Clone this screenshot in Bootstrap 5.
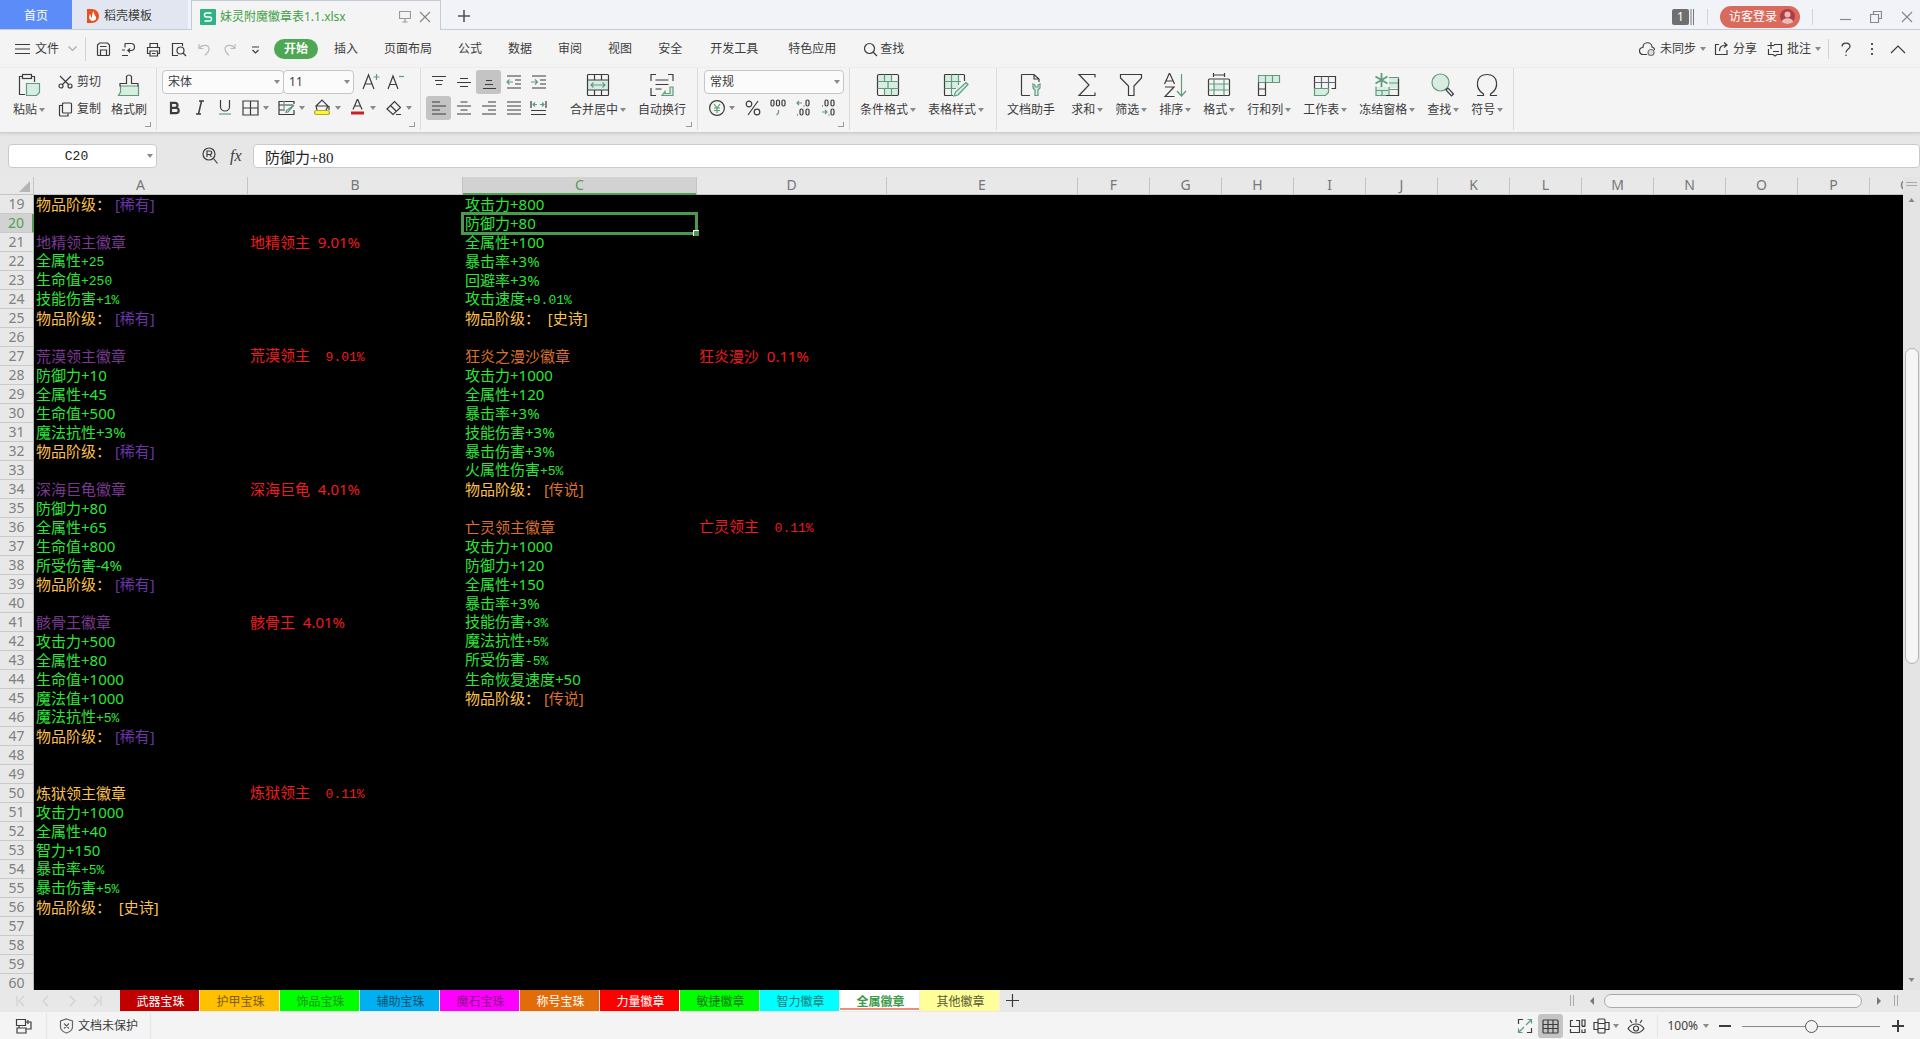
<!DOCTYPE html>
<html lang="zh-CN">
<head>
<meta charset="utf-8">
<meta name="viewport" content="width=device-width, initial-scale=1">
<title>妹灵附魔徽章表1.1.xlsx</title>
<link rel="stylesheet" href="https://cdn.jsdelivr.net/npm/bootstrap@5.3.0/dist/css/bootstrap.min.css">
<style>
:root{--ui:"Noto Sans","Noto Sans CJK SC",sans-serif;--ink:#3c3c3c;--line:#dcdcdc;--grn:#4fa050}
body{font-family:var(--ui);font-size:12px;line-height:16px;color:var(--ink);background:#e7e7e7;overflow:hidden}
button{font:inherit;color:inherit;background:none;border:0;padding:0;white-space:nowrap}
svg{display:block;flex:none;fill:none;stroke:#3c3c3c;stroke-width:1.2}
.g{stroke:#5e9c7c}.gf{stroke:#5e9c7c;fill:#d9ece2}.f{fill:#d9ece2;stroke:none}
.caret{width:0;height:0;border:3px solid transparent;border-top:4px solid #8a8a8a;border-bottom:0;flex:none}
.vline{width:1px;background:#d0d3da;flex:none}

.titlebar{height:30px;background:#f1f3f9;border-bottom:1px solid #c3cad8}
.titlebar>*{height:29px;padding-top:2px}
.home-tab{width:72px;background:#5b8cf8;color:#fff}
.docer-tab{width:116px;background:#e2e6f0;padding-left:14px;gap:4px}
.file-tab{width:250px;margin-left:3px;background:#f4f4f4;border:solid #c3cad8;border-width:1px 1px 0;height:30px;padding:2px 9px 0 8px;color:#3f9f45}
.win-count{background:#6f6f6f;color:#fff;width:17px;height:16px;border-radius:2px}
.login{background:#d96a5c;color:#fff;width:80px;height:22px;border-radius:11px;padding:0 5px 0 9px}

.menubar{height:38px;background:#f4f4f4;padding-top:1px}
.menubar .item{padding:0 13px;height:20px}
.menubar .wide{padding:0 15px}
.menubar .on{background:#4ea853;color:#fff;border-radius:10px;padding:0 10px;margin-right:3px;font-weight:700}

.ribbon{height:65px;background:#f4f4f4;border-bottom:1px solid #cdcdcd;box-shadow:0 1px 3px #cfcfcf;position:relative}
.grp{height:62px;border-right:1px solid var(--line);position:relative;padding-top:2px}
.grp.more::after{content:"";position:absolute;right:5px;bottom:3px;width:6px;height:5px;border:solid #999;border-width:0 1px 1px 0}
.big{display:flex;flex-direction:column;align-items:center;padding:3px 6px 0;gap:5px}
.big svg{height:24px}
.lab{display:flex;align-items:center;gap:2px}
.tool{width:25px;height:24px;display:flex;align-items:center;justify-content:center;border-radius:3px}
.drop{width:36px;height:24px;display:flex;align-items:center;gap:4px;padding-left:5px}
.sel{background:#c4c4c4}
.pick{position:relative;display:block}
.pick select{appearance:none;width:100%;height:24px;border:1px solid #c6c6c6;background:#fbfbfb;border-radius:4px;padding:0 5px;color:var(--ink);font-size:12px}
.pick::after{content:"";position:absolute;right:4px;top:10px;border:3px solid transparent;border-top:4px solid #8a8a8a;border-bottom:0}

.fbar{height:44px;padding-top:11px}
.fbar input{height:24px;border:1px solid #cacaca;border-radius:4px;background:#fff;color:#222}
.cellname input{width:149px;text-align:center;padding:1px 12px 0 0;font-family:"Liberation Mono",monospace;font-size:13px}
.formula{padding:1px 11px 0;font-family:"Liberation Serif","Noto Sans CJK SC",serif;font-size:15px}
.fx{font-family:"Liberation Serif",serif;width:14px}

.sheet{background:#000;overflow:hidden;min-height:0}
.grid{table-layout:fixed;border-collapse:separate;border-spacing:0;width:1942px;font-size:15px;line-height:16px}
.grid th{font-size:14px;font-weight:400;text-align:center;color:#808080;background:#e8e8e8;padding:0}
.grid thead th{height:18px;border-bottom:1px solid #c4c4c4;border-right:1px solid #c4c4c4;color:#777}
.grid tbody th{border-right:1px solid #b9b9b9;border-bottom:1px solid #c9c9c9}
.grid tbody tr{height:19px}
.grid td{padding:0 2px;white-space:nowrap;color:#2ce53a;vertical-align:middle;overflow:visible}
.grid thead .colsel{background:#d2d2d2;color:var(--grn);border-bottom-color:var(--grn);box-shadow:inset 0 -1px var(--grn)}
.grid .rowsel{background:#d2d2d2;color:var(--grn);border-right:2px solid var(--grn)}
.grid td.pick-cell{position:relative}
.pick-cell::before{content:"";position:absolute;inset:-2px -1px -2px -2px;border:3px solid #4c9850}
.pick-cell::after{content:"";position:absolute;right:-2px;bottom:-3px;width:6px;height:6px;background:#4c9850;border:solid #fff;border-width:1px 0 0 1px}
.song{font-family:"Liberation Mono",monospace;font-size:13px}
.grid .gold{color:#fcc14d}.rare{color:#6a35a8}.grid .tt{color:#78398f}.grid .leg{color:#dc702d}.grid .red{color:#ee1c1f}
.corner svg{margin:3px 3px 0 auto}
.vscroll{width:17px;background:#e4e4e4;flex:none;padding-top:4px}
.vthumb{width:14px;height:316px;margin-top:143px;border:1px solid #b3b3b3;border-radius:7px;background:#f5f5f5}

.tabstrip{height:22px;background:#e8e8e8}
.tabstrip .tabs button{width:80px;height:21px;border-right:1px solid #eee;padding:2px 0 0 2px}
.tabs .t-white{color:#fff}
.tabs .now{background:#fff;color:#3d9b49;font-weight:700;box-shadow:inset 0 -1px #fff,inset 0 -3px #f28b78,inset 4px 0 #fff,inset -4px 0 #fff}
.hthumb{width:258px;height:14px;border:1px solid #a9a9a9;border-radius:7px;background:#f4f4f4}
.statusbar{height:27px;background:#f4f4f4;padding-top:1px}
.zoomer{appearance:none;width:138px;height:14px;background:linear-gradient(#8a8a8a,#8a8a8a) center/100% 1px no-repeat}
.zoomer::-webkit-slider-thumb{appearance:none;width:13px;height:13px;border-radius:50%;border:1px solid #555;background:#f4f4f4}
</style>
<script src="https://cdn.jsdelivr.net/npm/bootstrap@5.3.0/dist/js/bootstrap.bundle.min.js"></script>
</head>
<body class="vh-100 d-flex flex-column">

<header class="titlebar d-flex align-items-start">
  <button class="home-tab">首页</button>
  <button class="docer-tab d-flex align-items-center">
    <svg width="14" height="16" viewBox="0 0 14 16" style="stroke:none"><path d="M1 1h5a7 7 0 0 1 0 14H1z" fill="#e8501f"/><path d="M6 13C2 11 3 8 4 6c1 2 1 3 2 4 0-3 0-5 2-7-1 4 3 5 2 8-1 1-2 2-4 2z" fill="#fff"/></svg>稻壳模板</button>
  <div class="file-tab d-flex align-items-center">
    <svg width="16" height="16" viewBox="0 0 16 16"><rect width="16" height="16" rx="1" fill="#30b384" stroke="none"/><path d="M11.500 4H6.500a2 2 0 0 0 0 4h3a2 2 0 0 1 0 4H4.500" stroke="#fff" stroke-width="1.500"/></svg>
    <span class="ms-1 me-auto">妹灵附魔徽章表1.1.xlsx</span>
    <svg class="me-2" width="12" height="13" viewBox="0 0 12 13" style="stroke:#999"><path d="M.5 1.500h11v7H.5zM6 8.500v3M3.500 12h5"/></svg>
    <button aria-label="关闭标签"><svg width="12" height="12" viewBox="0 0 12 12" style="stroke:#888"><path d="M1 1l10 10M11 1L1 11"/></svg></button>
  </div>
  <button class="ms-3 me-auto d-flex align-items-center" aria-label="新建"><svg width="14" height="14" viewBox="0 0 14 14" style="stroke:#555;stroke-width:1.600"><path d="M7 1v12M1 7h12"/></svg></button>
  <div class="d-flex align-items-center pt-1" style="padding-right:7px">
    <span class="win-count text-center">1</span>
    <svg class="me-2" width="6" height="16" viewBox="0 0 6 16" style="stroke:#777"><path d="M2 0v16M4.500 0v16" stroke-width="1"/></svg>
    <span class="vline me-2" style="height:16px;margin-left:4px"></span>
    <button class="login d-flex align-items-center justify-content-between ms-1">访客登录
      <svg width="15" height="15" viewBox="0 0 15 15" style="stroke:none"><circle cx="7.500" cy="7.500" r="7.500" fill="#a94048"/><circle cx="7.500" cy="5.500" r="3" fill="#efb8b4"/><path d="M2 13c0-5 11-5 11 0-3 2.500-8 2.500-11 0z" fill="#efb8b4"/></svg></button>
    <span class="vline" style="height:16px;margin:0 27px 0 12px"></span>
    <button aria-label="最小化"><svg width="11" height="12" viewBox="0 0 11 12" style="stroke:#888"><path d="M0 8.500h11"/></svg></button>
    <button style="margin:0 19px" aria-label="还原"><svg width="12" height="12" viewBox="0 0 12 12" style="stroke:#888"><path d="M.5 3.500h8v8h-8zM3.500 3.500v-3h8v7h-3"/></svg></button>
    <button aria-label="关闭"><svg width="12" height="12" viewBox="0 0 12 12" style="stroke:#888"><path d="M1 1l10 10M11 1L1 11"/></svg></button>
  </div>
</header>

<nav class="menubar d-flex align-items-center">
  <button class="d-flex align-items-center" style="padding:0 8px 0 15px;gap:5px">
    <svg width="15" height="12" viewBox="0 0 15 12"><path d="M0 1.500h15M0 6h15M0 10.500h15"/></svg>文件
    <svg class="ms-1" width="9" height="8" viewBox="0 0 9 8" style="stroke:#aaa"><path d="M.5 1.500l4 4 4-4"/></svg></button>
  <span class="vline" style="height:24px"></span>
  <div class="d-flex" style="gap:10px;padding:0 14px 0 10px">
    <button aria-label="保存"><svg width="15" height="15" viewBox="0 0 15 15"><path d="M1.500 12.500V3L3.500 1h8l2 2v9.500q0 1-1 1h-10q-1 0-1-1zM4 4.500h6.500M4.500 13V8h6v5"/></svg></button>
    <button aria-label="输出"><svg width="15" height="15" viewBox="0 0 15 15"><path d="M4 1.500h6a3.500 3.500 0 0 1 0 7H7l2-2M7 8.500l2 2M4 1.500v4M1 8h3M1 13.500h6"/></svg></button>
    <button aria-label="打印"><svg width="15" height="15" viewBox="0 0 15 15"><path d="M4 5V1.500h7.500V5M4 11.500H1.500v-6h12v6h-2M4 9h7.500v5H4zM6 11.500h3.500"/></svg></button>
    <button aria-label="打印预览"><svg width="16" height="15" viewBox="0 0 16 15"><path d="M7 13.500H1.500v-12h10V4"/><circle cx="9.500" cy="8.500" r="3.500"/><path d="M12 11l3 3"/></svg></button>
    <button aria-label="撤销"><svg width="15" height="15" viewBox="0 0 15 15" style="stroke:#bbb"><path d="M2 2v4.500h4.500M2 6.500C5 2 12 2.500 12 7c0 3-2 4-4 6.500"/></svg></button>
    <button aria-label="恢复"><svg width="15" height="15" viewBox="0 0 15 15" style="stroke:#bbb"><path d="M13 2v4.500H8.500M13 6.500C10 2 3 2.500 3 7c0 3 2 4 4 6.500"/></svg></button>
    <button class="ps-1" aria-label="更多"><svg width="9" height="15" viewBox="0 0 9 15"><path d="M1 5h7M1.500 8l3 3 3-3"/></svg></button>
  </div>
  <button class="item on">开始</button>
  <button class="item">插入</button><button class="item">页面布局</button><button class="item">公式</button><button class="item">数据</button><button class="item">审阅</button><button class="item">视图</button><button class="item">安全</button><button class="item wide">开发工具</button><button class="item wide">特色应用</button>
  <button class="d-flex align-items-center me-auto ms-2" style="gap:2px;padding-left:4px"><svg width="15" height="15" viewBox="0 0 15 15"><circle cx="6.500" cy="6.500" r="5"/><path d="M10 10l4 4"/></svg>查找</button>
  <button class="d-flex align-items-center gap-1"><svg width="17" height="15" viewBox="0 0 17 15"><path d="M8 12.500H4A3.500 3.500 0 0 1 4 5.500 4.500 4.500 0 0 1 13 5a3 3 0 0 1 2.500 3"/><circle cx="12" cy="10.500" r="3" style="fill:#ddd;stroke:#777"/></svg>未同步<span class="caret"></span></button>
  <button class="d-flex align-items-center gap-1 ps-2"><svg width="15" height="14" viewBox="0 0 15 14"><path d="M5 2.500H1.500v10H13V8M5.500 9c0-4 2-6 7-6M10 .5L13 3l-3 2.500"/></svg>分享</button>
  <button class="d-flex align-items-center gap-1" style="padding:0 7px 0 10px"><svg width="16" height="15" viewBox="0 0 16 15"><path d="M7 2.500h7.500v10H10L8 14l-2-1.500H1.500V7M4 0v7M.5 3.500h7M6 9.500h6"/></svg>批注<span class="caret"></span></button>
  <span class="vline" style="height:20px"></span>
  <button class="ps-2 pe-1 ms-1" aria-label="帮助"><svg width="10" height="15" viewBox="0 0 10 15"><path d="M1 4.500C1 0 9 0 9 4.500 9 7 5 7 5 10.500M5 12.500v1.500"/></svg></button>
  <button class="px-3" aria-label="更多选项"><svg width="3" height="14" viewBox="0 0 3 14" style="stroke:none"><path d="M0 1h2v2H0zM0 6h2v2H0zM0 11h2v2H0z" fill="#555"/></svg></button>
  <button style="padding-right:14px" aria-label="收起功能区"><svg width="16" height="9" viewBox="0 0 16 9"><path d="M1 8l7-7 7 7"/></svg></button>
</nav>

<section class="ribbon d-flex">
  <div class="grp more d-flex" style="padding-left:7px;padding-right:3px">
    <button class="big"><svg width="24" viewBox="0 0 24 24"><path d="M5 3.500H2.500v18H8M15 3.500h2.500V9"/><rect x="5.500" y="1.500" width="9" height="4"/><path class="gf" d="M9.500 10.500h13v9l-3 3h-10z"/></svg><span class="lab">粘贴<span class="caret"></span></span></button>
    <div class="d-flex flex-column" style="gap:2px;padding-left:7px">
      <button class="d-flex align-items-center gap-1" style="height:25px"><svg width="15" height="14" viewBox="0 0 15 14"><path d="M2 1l9 9M13 1L4 10"/><circle cx="3" cy="11" r="2"/><circle cx="12" cy="11" r="2"/></svg>剪切</button>
      <button class="d-flex align-items-center gap-1" style="height:25px"><svg width="15" height="15" viewBox="0 0 15 15"><rect x="4.500" y="1" width="9" height="10" rx="1"/><path d="M4 3.500H1.500V13q0 1 1 1H10v-2.500"/></svg>复制</button>
    </div>
    <button class="big ms-1"><svg width="24" viewBox="0 0 24 24"><path class="gf" d="M3.500 13v6l-2 3.500h20V13z"/><path d="M3 13.500v-3h6.500v-7q2.500-3 5 0v7H21v3"/></svg>格式刷</button>
  </div>
  <div class="grp more" style="padding-left:5px;width:264px">
    <div class="d-flex align-items-center" style="margin-bottom:2px">
      <label class="pick" style="width:122px"><select aria-label="字体"><option>宋体</option></select></label>
      <label class="pick" style="width:71px;margin-left:-1px"><select aria-label="字号"><option>11</option></select></label>
      <button class="tool ms-1" aria-label="增大字号"><svg width="18" height="18" viewBox="0 0 18 18"><path d="M1 16L6.500 2 12 16M3 11h7"/><path class="g" d="M14.500 1v6M11.500 4h6"/></svg></button>
      <button class="tool" aria-label="减小字号"><svg width="18" height="18" viewBox="0 0 18 18"><path d="M1 16L6 3l5 13M3 11.500h6"/><path class="g" d="M12 3.500h5"/></svg></button>
    </div>
    <div class="d-flex">
      <button class="tool" aria-label="加粗"><svg width="14" height="14" viewBox="0 0 14 14" style="stroke-width:2.200"><path d="M3 1.800h4a2.500 2.500 0 0 1 0 5H3zM3 6.800h5a2.700 2.700 0 0 1 0 5.400H3z"/></svg></button>
      <button class="tool" aria-label="倾斜"><svg width="12" height="15" viewBox="0 0 12 15"><path d="M5 1h5M2 14h5M7.500 1l-3 13" stroke-width="1.500"/></svg></button>
      <button class="tool" aria-label="下划线"><svg width="14" height="15" viewBox="0 0 14 15"><path d="M2.500 0v7a4.500 4 0 0 0 9 0V0"/><path class="g" d="M1 14h12"/></svg></button>
      <button class="drop" aria-label="边框"><svg width="17" height="16" viewBox="0 0 17 16"><path d="M1 1h15v14H1zM8.500 1v14M1 8h15"/></svg><span class="caret"></span></button>
      <button class="drop" aria-label="单元格样式"><svg width="17" height="16" viewBox="0 0 17 16"><path d="M16 4V1.500H1V5h14M1 5v5h6M1 10v4.500h15V10"/><path class="g" d="M6 1v8M16 5l-6 7-2 .5.5-2z"/></svg><span class="caret"></span></button>
      <button class="drop" aria-label="填充颜色"><svg width="17" height="17" viewBox="0 0 17 17"><path d="M3 11L2 7l6-6 6 6-2 4M2 7h12M15 7v4"/><rect x=".5" y="11.500" width="15" height="4" rx="2" style="fill:#fcf63c;stroke:#b5a92a"/></svg><span class="caret"></span></button>
      <button class="drop" aria-label="字体颜色"><svg width="16" height="17" viewBox="0 0 16 17"><path d="M3 10.500L7.500 0 12 10.500M4.500 7h6"/><path d="M1 14h13" style="stroke:#cc1f24;stroke-width:3"/></svg><span class="caret"></span></button>
      <button class="drop" aria-label="清除"><svg width="16" height="16" viewBox="0 0 16 16"><path d="M1 9l7.500-7.500 6 6L7 14.500zM4.500 5.500l6 6M10 14.500h5"/></svg><span class="caret"></span></button>
    </div>
  </div>
  <div class="grp more d-flex" style="padding-left:5px;padding-right:5px">
    <div>
      <div class="d-flex" style="margin-bottom:2px">
        <button class="tool" aria-label="顶端对齐"><svg width="14" height="14" viewBox="0 0 14 14"><path d="M0 1.500h14M3 5.500h8M4 9.500h6"/></svg></button>
        <button class="tool" aria-label="垂直居中"><svg width="14" height="14" viewBox="0 0 14 14"><path d="M3 3.500h8M0 7.500h14M3 11.500h8"/></svg></button>
        <button class="tool sel" aria-label="底端对齐"><svg width="14" height="14" viewBox="0 0 14 14"><path d="M4 5.500h6M3 9.500h8M1 13.500h13"/></svg></button>
        <button class="tool" aria-label="减少缩进"><svg width="15" height="14" viewBox="0 0 15 14"><path d="M1 1h14M9 5h6M9 9h6M1 13h14"/><path class="g" d="M7 7H1M3.500 4.500L1 7l2.500 2.500"/></svg></button>
        <button class="tool" aria-label="增加缩进"><svg width="15" height="14" viewBox="0 0 15 14"><path d="M1 1h14M9 5h6M9 9h6M1 13h14"/><path class="g" d="M0 7h6M4 4.500L6.500 7 4 9.500"/></svg></button>
      </div>
      <div class="d-flex">
        <button class="tool sel" aria-label="左对齐"><svg width="14" height="14" viewBox="0 0 14 14"><path d="M0 1h8M0 5h14M0 9h8M0 13h14"/></svg></button>
        <button class="tool" aria-label="居中"><svg width="14" height="14" viewBox="0 0 14 14"><path d="M3.500 1h7M0 5h14M3.500 9h7M0 13h14"/></svg></button>
        <button class="tool" aria-label="右对齐"><svg width="14" height="14" viewBox="0 0 14 14"><path d="M6 1h8M0 5h14M6 9h8M0 13h14"/></svg></button>
        <button class="tool" aria-label="两端对齐"><svg width="14" height="14" viewBox="0 0 14 14"><path d="M0 1h14M0 5h14M0 9h14M0 13h14"/></svg></button>
        <button class="tool" aria-label="分散对齐"><svg width="17" height="14" viewBox="0 0 17 14"><path d="M1 0v7M16 0v7M1 9.500h15M1 13.500h15"/><path class="g" d="M3 3.500h4M5 1.500l-2 2 2 2M10 3.500h4M12 1.500l2 2-2 2"/></svg></button>
      </div>
    </div>
    <button class="big" style="margin-left:13px"><svg width="24" viewBox="0 0 24 24"><rect class="f" x="1.500" y="7" width="21" height="10"/><rect x="1.500" y="1.500" width="21" height="21" rx="1"/><path d="M1.500 7h21M1.500 17h21M8.500 1.500V7M15.500 1.500V7M8.500 17v5.500M15.500 17v5.500"/><path class="g" d="M5 12h14M7.500 9.500L5 12l2.500 2.500M16.500 9.500L19 12l-2.500 2.500"/></svg><span class="lab">合并居中<span class="caret"></span></span></button>
    <button class="big"><svg width="26" viewBox="0 0 26 24"><path d="M7 1.500H2V8M19 1.500h5V8M2 15v7.500h5M6.500 7h13M6.500 11.500h13M6.500 16h6"/><path class="gf" d="M21 14h3v8.500H13l3-4v2h5z"/></svg>自动换行</button>
  </div>
  <div class="grp more" style="padding-left:6px;padding-right:5px">
    <label class="pick" style="width:140px;margin-bottom:2px"><select aria-label="数字格式"><option>常规</option></select></label>
    <div class="d-flex">
      <button class="drop" aria-label="货币"><svg width="16" height="16" viewBox="0 0 16 16"><circle cx="8" cy="8" r="7.400"/><path class="g" d="M5 4l3 4 3-4M8 8v5M5 8h6M5 10.500h6"/></svg><span class="caret"></span></button>
      <button class="tool" aria-label="百分比"><svg width="16" height="16" viewBox="0 0 16 16"><path d="M13 1L3 15"/><circle cx="4" cy="4" r="2.800"/><circle cx="12" cy="12" r="2.800"/></svg></button>
      <button class="tool" aria-label="千位分隔"><svg width="16" height="17" viewBox="0 0 16 17"><rect x="1" y="1" width="3" height="6" rx="1.500"/><rect x="6.500" y="1" width="3" height="6" rx="1.500"/><rect x="12" y="1" width="3" height="6" rx="1.500"/><path class="g" d="M8.500 11v3l-2 2"/></svg></button>
      <button class="tool" aria-label="增加小数位"><svg width="16" height="17" viewBox="0 0 16 17"><path class="g" d="M2 4h5M4 2L2 4l2 2"/><rect x="11" y="1" width="3" height="6" rx="1.500"/><rect x="5" y="10" width="3" height="6" rx="1.500"/><rect x="11" y="10" width="3" height="6" rx="1.500"/><path d="M8.500 7h1M2 16h1"/></svg></button>
      <button class="tool" aria-label="减少小数位"><svg width="16" height="17" viewBox="0 0 16 17"><path class="g" d="M2 13h5M5 11l2 2-2 2"/><rect x="5" y="1" width="3" height="6" rx="1.500"/><rect x="11" y="1" width="3" height="6" rx="1.500"/><rect x="11" y="10" width="3" height="6" rx="1.500"/><path d="M2 7h1M8.500 16h1"/></svg></button>
    </div>
  </div>
  <div class="grp d-flex" style="padding-left:4px;padding-right:6px">
    <button class="big"><svg width="24" viewBox="0 0 24 24"><path class="f" d="M1.500 1.500h14v7h7v14h-14v-7h-7z"/><rect x="1.500" y="1.500" width="21" height="21" rx="1.500"/><path class="g" d="M1.500 8.500h21M1.500 15.500h21M8.500 1.500v7M15.500 1.500v7M12 8.500v7M8.500 15.500v7M15.500 15.500v7"/></svg><span class="lab">条件格式<span class="caret"></span></span></button>
    <button class="big"><svg width="26" viewBox="0 0 26 24"><path class="f" d="M1.500 1.500h14v14h-14z"/><path d="M10 22.500H2.500q-1 0-1-1v-19q0-1 1-1h18q1 0 1 1V8"/><path class="g" d="M1.500 8.500H18M1.500 15.500H13M8.500 1.500v21M15.500 1.500V12"/><path class="gf" d="M23 9.500l2 2-10 10.500-4 1 1.500-4z"/></svg><span class="lab">表格样式<span class="caret"></span></span></button>
  </div>
  <div class="grp d-flex" style="padding-left:4px;padding-right:4px">
    <button class="big me-1"><svg width="22" viewBox="0 0 22 24"><path d="M10 22.500H2.500q-1 0-1-1v-19q0-1 1-1H14L19 6v3M14 1.500V6h5"/><path class="gf" d="M13 11v4l2 2v5.500h3V17l2-2v-4l-2 1v2h-3v-2z"/></svg>文档助手</button>
    <button class="big"><svg width="20" viewBox="0 0 20 24"><path d="M18 4.500V1.500H2L12 12 2 22.500h16v-3"/></svg><span class="lab">求和<span class="caret"></span></span></button>
    <button class="big"><svg width="24" viewBox="0 0 24 24"><path d="M1.500 1.500h21V5L15 13v9.500H9.500V13L1.500 5z"/></svg><span class="lab">筛选<span class="caret"></span></span></button>
    <button class="big"><svg width="24" viewBox="0 0 24 24"><path d="M1.500 11L6.500 0l5 11M3 8h7M2 14h9L2 23.500h9.500"/><path class="g" d="M18.500 1v21M14 18l4.500 5 4.500-5"/></svg><span class="lab">排序<span class="caret"></span></span></button>
    <button class="big"><svg width="24" viewBox="0 0 24 24"><path class="f" d="M7 11h10v6H7z"/><rect x="1.500" y="6" width="21" height="16.500" rx="1"/><path d="M6.500 0v4M17.500 0v4M6.500 2h11"/><path class="g" d="M1.500 11h21M1.500 17h21M7 6v16.500M17 6v16.500"/></svg><span class="lab">格式<span class="caret"></span></span></button>
    <button class="big"><svg width="24" viewBox="0 0 24 24"><path class="gf" d="M1.500 2.500h21v7h-21z"/><path class="g" d="M8.500 2.500v7M15.500 2.500v7"/><path d="M1.500 9.500v13h7v-13M1.500 16h7"/></svg><span class="lab">行和列<span class="caret"></span></span></button>
    <button class="big"><svg width="24" viewBox="0 0 24 24"><path d="M1.500 15.500v-12h21v12h-4"/><path d="M1.500 9.500h21M8.500 3.500v12M15.500 3.500v12M1.500 15.500h14" style="stroke:#667"/><path class="gf" d="M1.500 15.500h14v4l-3 3h-11z"/></svg><span class="lab">工作表<span class="caret"></span></span></button>
    <button class="big"><svg width="26" viewBox="0 0 26 24"><path class="f" d="M2 14h12v9H2zM15 5h9v10h-9z"/><path class="g" d="M7.500 0v14M1.500 3.500l12 7M13.500 3.500l-12 7" stroke-width="1.800"/><path d="M15 4.500h9.500v18H2v-9M15 10h9.500M15 16.500h9.500M2 17.500h12M8 17v5.500M15 14v8.500" class="g"/><path d="M24.500 6v16.500H12"/></svg><span class="lab">冻结窗格<span class="caret"></span></span></button>
    <button class="big"><svg width="24" viewBox="0 0 24 24"><circle class="gf" cx="9.500" cy="9.500" r="8.500"/><path d="M15 17l2-2 5.500 6-2 2z"/></svg><span class="lab">查找<span class="caret"></span></span></button>
    <button class="big"><svg width="24" viewBox="0 0 24 24"><path d="M2 22.500h6.500V21C-1 15 1 1.500 12 1.500S25 15 15.500 21v1.500H22"/></svg><span class="lab">符号<span class="caret"></span></span></button>
  </div>
</section>

<section class="fbar d-flex align-items-start ps-2">
  <label class="pick cellname"><input aria-label="名称框" value="C20"></label>
  <div class="d-flex align-items-center" style="height:24px;gap:11px;padding:0 5px 0 45px">
    <svg width="17" height="18" viewBox="0 0 17 18"><circle cx="7" cy="7" r="6"/><path d="M5 10V4h3a1.500 1.500 0 0 1 0 3.500H5M7.500 7.500L9.500 10M11.500 11.500l4 5"/></svg>
    <span class="fx fst-italic fs-6 me-1">fx</span>
  </div>
  <input class="formula flex-grow-1" aria-label="编辑栏" value="防御力+80">
</section>

<main class="d-flex flex-grow-1" style="min-height:0">
  <div class="sheet flex-grow-1">
    <table class="grid">
      <colgroup><col style="width:34px"><col style="width:214px"><col style="width:215px"><col style="width:234px"><col style="width:190px"><col style="width:191px"><col span="12" style="width:72px"></colgroup>
      <thead><tr><th class="corner"><svg width="11" height="11" viewBox="0 0 11 11"><path d="M11 0v11H0z" fill="#b5b5b5" stroke="none"/></svg></th><th>A</th><th>B</th><th class="colsel">C</th><th>D</th><th>E</th><th>F</th><th>G</th><th>H</th><th>I</th><th>J</th><th>K</th><th>L</th><th>M</th><th>N</th><th>O</th><th>P</th><th>Q</th></tr></thead>
      <tbody>
      <tr><th>19</th><td class="gold">物品阶级：&nbsp;<span class="rare">[稀有]</span></td><td></td><td>攻击力+800</td><td></td></tr>
      <tr><th class="rowsel">20</th><td></td><td></td><td class="pick-cell">防御力+80</td><td></td></tr>
      <tr><th>21</th><td class="tt">地精领主徽章</td><td class="red">地精领主&nbsp; 9.01%</td><td>全属性+100</td><td></td></tr>
      <tr><th>22</th><td>全属性<span class="song">+25</span></td><td></td><td>暴击率+3%</td><td></td></tr>
      <tr><th>23</th><td>生命值<span class="song">+250</span></td><td></td><td>回避率+3%</td><td></td></tr>
      <tr><th>24</th><td>技能伤害<span class="song">+1%</span></td><td></td><td>攻击速度<span class="song">+9.01%</span></td><td></td></tr>
      <tr><th>25</th><td class="gold">物品阶级：&nbsp;<span class="rare">[稀有]</span></td><td></td><td class="gold">物品阶级：&nbsp; [史诗]</td><td></td></tr>
      <tr><th>26</th><td></td><td></td><td></td><td></td></tr>
      <tr><th>27</th><td class="tt">荒漠领主徽章</td><td class="red">荒漠领主<span class="song">&nbsp; 9.01%</span></td><td class="leg">狂炎之漫沙徽章</td><td class="red">狂炎漫沙&nbsp; 0.11%</td></tr>
      <tr><th>28</th><td>防御力+10</td><td></td><td>攻击力+1000</td><td></td></tr>
      <tr><th>29</th><td>全属性+45</td><td></td><td>全属性+120</td><td></td></tr>
      <tr><th>30</th><td>生命值+500</td><td></td><td>暴击率+3%</td><td></td></tr>
      <tr><th>31</th><td>魔法抗性+3%</td><td></td><td>技能伤害+3%</td><td></td></tr>
      <tr><th>32</th><td class="gold">物品阶级：&nbsp;<span class="rare">[稀有]</span></td><td></td><td>暴击伤害+3%</td><td></td></tr>
      <tr><th>33</th><td></td><td></td><td>火属性伤害<span class="song">+5%</span></td><td></td></tr>
      <tr><th>34</th><td class="tt">深海巨龟徽章</td><td class="red">深海巨龟&nbsp; 4.01%</td><td class="gold">物品阶级：&nbsp;<span class="leg">[传说]</span></td><td></td></tr>
      <tr><th>35</th><td>防御力+80</td><td></td><td></td><td></td></tr>
      <tr><th>36</th><td>全属性+65</td><td></td><td class="leg">亡灵领主徽章</td><td class="red">亡灵领主<span class="song">&nbsp; 0.11%</span></td></tr>
      <tr><th>37</th><td>生命值+800</td><td></td><td>攻击力+1000</td><td></td></tr>
      <tr><th>38</th><td>所受伤害-4%</td><td></td><td>防御力+120</td><td></td></tr>
      <tr><th>39</th><td class="gold">物品阶级：&nbsp;<span class="rare">[稀有]</span></td><td></td><td>全属性+150</td><td></td></tr>
      <tr><th>40</th><td></td><td></td><td>暴击率+3%</td><td></td></tr>
      <tr><th>41</th><td class="tt">骸骨王徽章</td><td class="red">骸骨王&nbsp; 4.01%</td><td>技能伤害<span class="song">+3%</span></td><td></td></tr>
      <tr><th>42</th><td>攻击力+500</td><td></td><td>魔法抗性<span class="song">+5%</span></td><td></td></tr>
      <tr><th>43</th><td>全属性+80</td><td></td><td>所受伤害<span class="song">-5%</span></td><td></td></tr>
      <tr><th>44</th><td>生命值+1000</td><td></td><td>生命恢复速度+50</td><td></td></tr>
      <tr><th>45</th><td>魔法值+1000</td><td></td><td class="gold">物品阶级：&nbsp;<span class="leg">[传说]</span></td><td></td></tr>
      <tr><th>46</th><td>魔法抗性<span class="song">+5%</span></td><td></td><td></td><td></td></tr>
      <tr><th>47</th><td class="gold">物品阶级：&nbsp;<span class="rare">[稀有]</span></td><td></td><td></td><td></td></tr>
      <tr><th>48</th><td></td><td></td><td></td><td></td></tr>
      <tr><th>49</th><td></td><td></td><td></td><td></td></tr>
      <tr><th>50</th><td class="gold">炼狱领主徽章</td><td class="red">炼狱领主<span class="song">&nbsp; 0.11%</span></td><td></td><td></td></tr>
      <tr><th>51</th><td>攻击力+1000</td><td></td><td></td><td></td></tr>
      <tr><th>52</th><td>全属性+40</td><td></td><td></td><td></td></tr>
      <tr><th>53</th><td>智力+150</td><td></td><td></td><td></td></tr>
      <tr><th>54</th><td>暴击率<span class="song">+5%</span></td><td></td><td></td><td></td></tr>
      <tr><th>55</th><td>暴击伤害<span class="song">+5%</span></td><td></td><td></td><td></td></tr>
      <tr><th>56</th><td class="gold">物品阶级：&nbsp; [史诗]</td><td></td><td></td><td></td></tr>
      <tr><th>57</th><td></td><td></td><td></td><td></td></tr>
      <tr><th>58</th><td></td><td></td><td></td><td></td></tr>
      <tr><th>59</th><td></td><td></td><td></td><td></td></tr>
      <tr><th>60</th><td></td><td></td><td></td><td></td></tr>
      </tbody>
    </table>
  </div>
  <div class="vscroll d-flex flex-column align-items-center">
    <svg width="11" height="24" viewBox="0 0 11 24" style="stroke:#aaa"><path d="M0 1.500h11M0 4.500h11"/><path d="M2.500 21l3-4 3 4z" fill="#888" stroke="none"/></svg>
    <div class="vthumb"></div>
    <svg class="mt-auto mb-1" width="9" height="8" viewBox="0 0 9 8"><path d="M1.500 0l3 4 3-4z" fill="#888" stroke="none"/></svg>
  </div>
</main>

<section class="tabstrip d-flex align-items-start">
  <div class="d-flex align-items-center justify-content-between" style="width:120px;height:21px;padding:0 17px 0 16px">
    <svg width="86" height="12" viewBox="0 0 86 12" style="stroke:#d0d0d0"><path d="M1 1v10M8 1L3 6l5 5M32 1l-5 5 5 5M54 1l5 5-5 5M78 1l5 5-5 5M85 1v10"/></svg>
  </div>
  <div class="tabs d-flex">
    <button class="t-white" style="background:#c00000">武器宝珠</button><button style="background:#ffc000;color:#7d5e08">护甲宝珠</button><button style="background:#00ff00;color:#109410">饰品宝珠</button><button style="background:#00b0f0;color:#0b4f70">辅助宝珠</button><button style="background:#ff00ff;color:#8c0f8c">魔石宝珠</button><button class="t-white" style="background:#e26b0a">称号宝珠</button><button class="t-white" style="background:#ff0000">力量徽章</button><button style="background:#00ff00;color:#107a10">敏捷徽章</button><button style="background:#00ffff;color:#147c7c">智力徽章</button><button class="now">全属徽章</button><button style="background:#ffff99;color:#5a5a32">其他徽章</button>
  </div>
  <button class="me-auto p-1" style="margin-left:2px" aria-label="新建工作表"><svg width="13" height="13" viewBox="0 0 13 13"><path d="M6.500 0v13M0 6.500h13"/></svg></button>
  <div class="d-flex align-items-center" style="height:21px;gap:8px;padding-right:22px">
    <svg width="4" height="11" viewBox="0 0 4 11" style="stroke:#aaa"><path d="M.5 0v11M3.500 0v11" stroke-width="1"/></svg>
    <svg class="ms-1" width="10" height="8" viewBox="0 0 10 8"><path d="M8 0v8L4 4z" fill="#777" stroke="none"/></svg>
    <div class="hthumb"></div>
    <svg width="16" height="8" viewBox="0 0 16 8"><path d="M7 0v8l4-4z" fill="#777" stroke="none"/></svg>
    <svg width="4" height="11" viewBox="0 0 4 11" style="stroke:#aaa"><path d="M.5 0v11M3.500 0v11" stroke-width="1"/></svg>
  </div>
</section>

<footer class="statusbar d-flex align-items-center">
  <button style="padding:0 14px 0 15px" aria-label="状态选项"><svg width="17" height="16" viewBox="0 0 17 16"><path d="M1.500 1.500h9v6h-9zM4 7.500V10M2 10h9v5H2zM10.500 4H16v7h-5M13 2v4"/></svg></button>
  <span class="vline" style="height:26px;background:#e4e4e4"></span>
  <button class="d-flex align-items-center gap-1" style="padding:0 12px"><svg width="15" height="16" viewBox="0 0 15 16" style="stroke:#666"><path d="M7.500 1l6 2v6c0 3-3 5-6 6-3-1-6-3-6-6V3zM5 5.500l5 5M10 5.500l-5 5"/></svg>文档未保护</button>
  <span class="vline me-auto" style="height:26px;background:#e4e4e4"></span>
  <button style="margin-right:5px" aria-label="全屏"><svg width="16" height="16" viewBox="0 0 16 16"><path d="M1.500 6V1.500H6M10 14.500h4.500V10"/><path class="g" d="M9 7l5-5M7 9l-5 5M10.500 1.500h4v4M1.500 10.500v4h4"/></svg></button>
  <button class="tool sel" aria-label="普通视图"><svg width="17" height="15" viewBox="0 0 17 15"><rect x="1" y="1" width="15" height="13" rx="1"/><path d="M6 1v13M11 1v13M1 5.500h15M1 9.500h15"/></svg></button>
  <button style="margin:0 7px 0 6px" aria-label="分页预览"><svg width="17" height="15" viewBox="0 0 17 15"><path d="M4 1.500H1.500v6h9v-6H7M13 1h3v6h-3zM13 7.500h3M1.500 10v3.500h9V7.500M13 10.500v3h3V10"/></svg></button>
  <button class="d-flex align-items-center me-2" style="gap:3px" aria-label="页面布局"><svg width="17" height="16" viewBox="0 0 17 16"><rect x="5" y="1" width="7" height="14" rx="1"/><path d="M5 4.500H1v7h4M12 4.500h4v7h-4M5 5.500h7M5 10.500h7"/></svg><span class="caret"></span></button>
  <button aria-label="护眼模式"><svg width="18" height="17" viewBox="0 0 18 17"><path d="M1 10.500c4-6 12-6 16 0-4 6-12 6-16 0zM9 1v3.500M3 2l2 3M15 2l-2 3"/><circle cx="9" cy="10.500" r="2.500"/></svg></button>
  <span class="vline" style="height:22px;margin:0 9px 0 12px;background:#e4e4e4"></span>
  <button class="d-flex align-items-center" style="gap:5px;margin-right:10px">100%<span class="caret"></span></button>
  <button aria-label="缩小"><svg width="12" height="12" viewBox="0 0 12 12"><path d="M0 6h12" stroke-width="2"/></svg></button>
  <input class="zoomer" style="margin:0 12px 0 11px" type="range" aria-label="缩放" min="0" max="100" value="50">
  <button style="margin-right:16px" aria-label="放大"><svg width="12" height="12" viewBox="0 0 12 12"><path d="M0 6h12M6 0v12" stroke-width="2"/></svg></button>
</footer>
</body>
</html>
